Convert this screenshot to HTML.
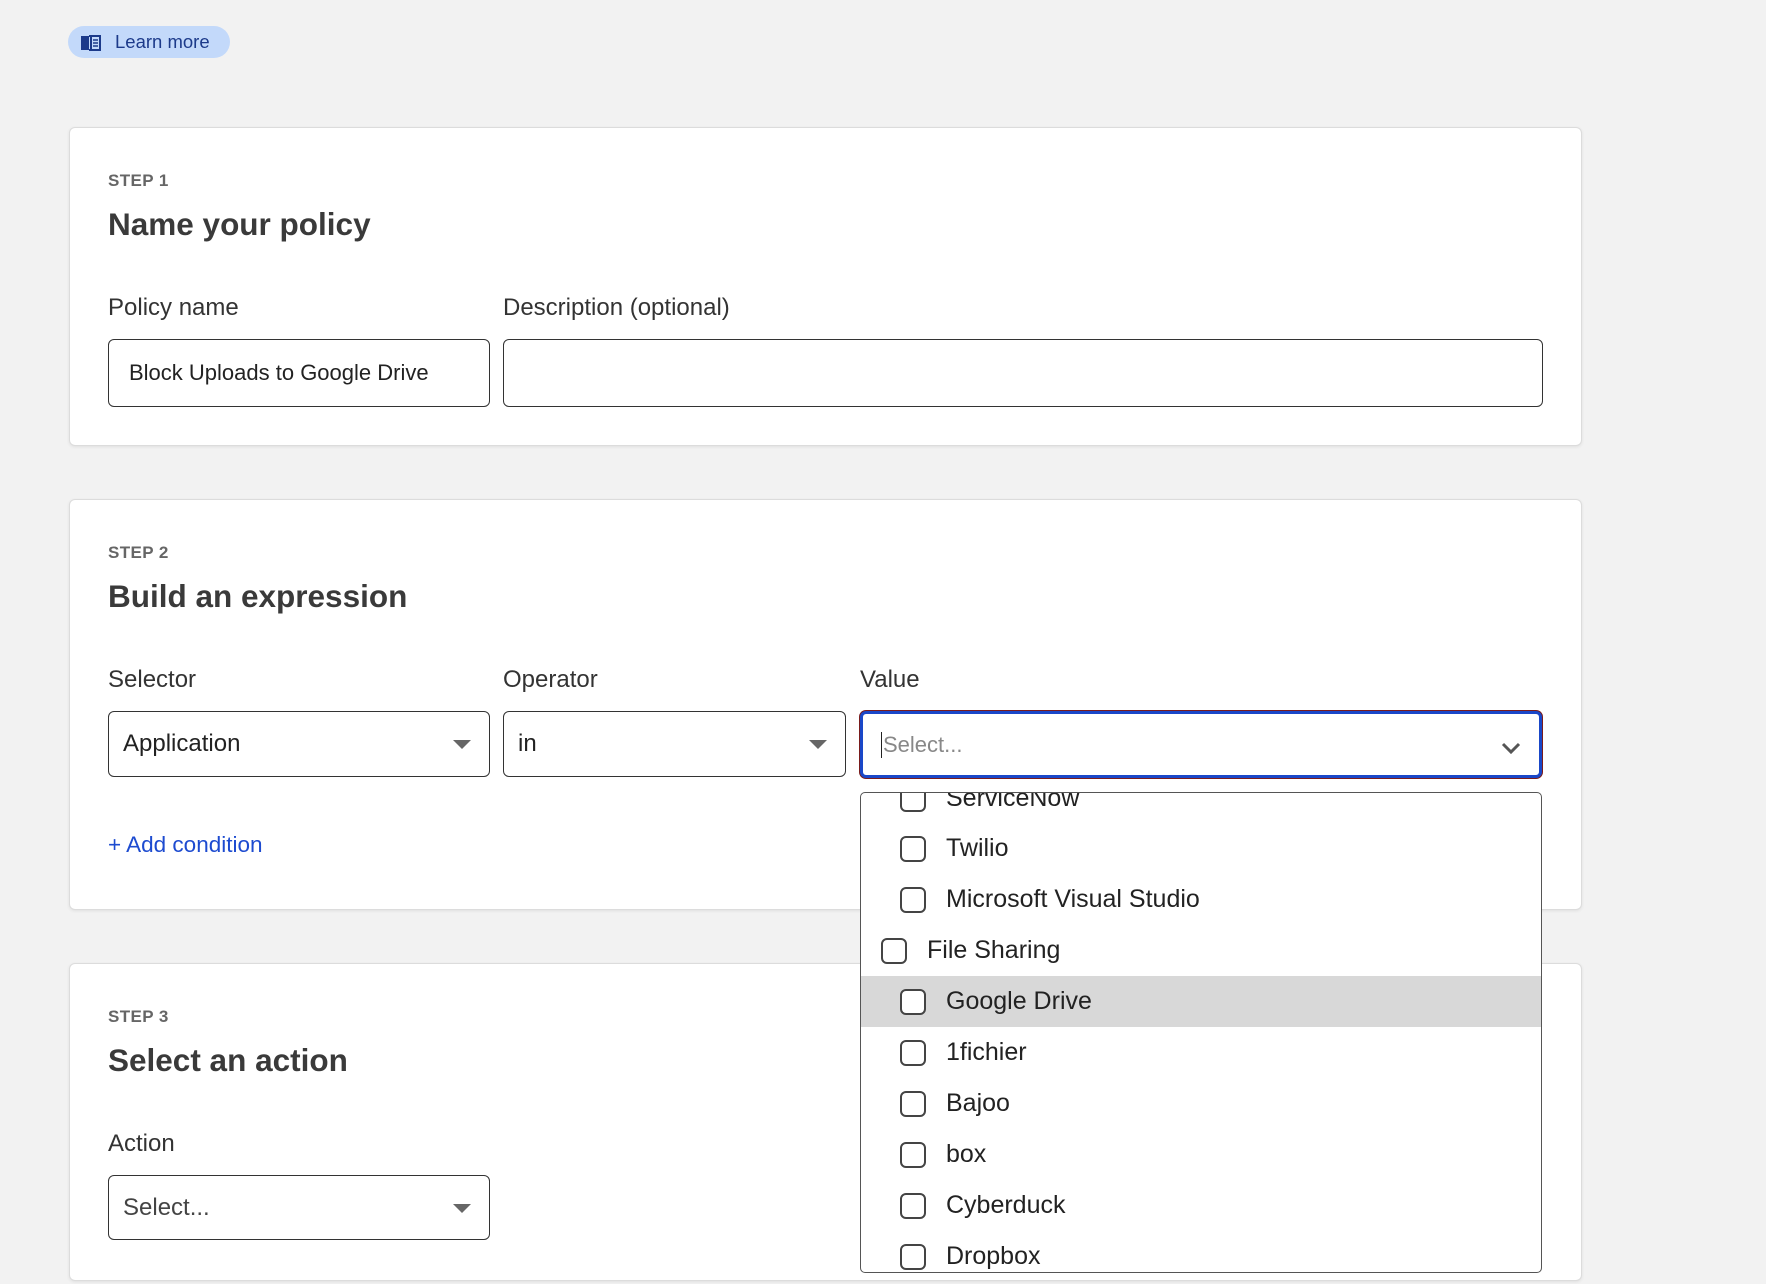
<!DOCTYPE html>
<html style="overflow:hidden;height:1284px"><head><meta charset="utf-8"><style>
*{box-sizing:border-box;margin:0;padding:0}
body{width:1766px;height:1284px;background:#f2f2f2;font-family:"Liberation Sans",Arial,sans-serif;position:relative;overflow:hidden;color:#222}
.abs{position:absolute}
.card{position:absolute;left:69px;width:1513px;background:#fff;border:1px solid #dcdcdc;border-radius:6px;box-shadow:0 1px 3px rgba(0,0,0,.08)}
.step{position:absolute;left:108px;font-size:17px;font-weight:bold;color:#666;letter-spacing:.4px}
.h{position:absolute;left:108px;font-size:31.5px;font-weight:bold;color:#3a3a3a}
.lbl{position:absolute;font-size:24px;color:#333}
.inp{position:absolute;border:1.5px solid #333;border-radius:6px;background:#fff;font-size:24px;padding-left:14px;display:flex;align-items:center}
.tri{position:absolute;right:18px;top:50%;margin-top:-4px;width:0;height:0;border-left:9px solid transparent;border-right:9px solid transparent;border-top:9px solid #666}
.row{position:absolute;left:0;width:100%;height:51px;font-size:25px;color:#222;display:flex;align-items:center}
.cb{width:26px;height:26px;border:2px solid #444;border-radius:6px;margin-right:20px;background:#fff;flex:none}
</style></head><body>
<div class="abs" style="left:68px;top:26px;width:162px;height:32px;background:#c3d9fa;border-radius:16px;display:flex;align-items:center;padding-left:12px;color:#1c3a8a;font-size:18.5px">
<svg width="22" height="17" viewBox="0 0 22 17" style="margin-right:13px"><path d="M1 2h8v14H1z" fill="#1c3a8a"/><path d="M11 2h9v14h-9z" fill="none" stroke="#1c3a8a" stroke-width="2"/><path d="M13 6h5M13 9h5M13 12h5" stroke="#1c3a8a" stroke-width="1.5"/><path d="M9 2l2 0M9 16h2" stroke="#1c3a8a" stroke-width="2"/></svg>Learn more</div>

<div class="card" style="top:127px;height:319px"></div>
<div class="step" style="top:171px">STEP 1</div>
<div class="h" style="top:206px">Name your policy</div>
<div class="lbl" style="left:108px;top:294px">Policy name</div>
<div class="lbl" style="left:503px;top:294px">Description (optional)</div>
<div class="inp" style="left:108px;top:339px;width:382px;height:68px;font-size:22px;padding-left:20px">Block Uploads to Google Drive</div>
<div class="inp" style="left:503px;top:339px;width:1040px;height:68px"></div>

<div class="card" style="top:499px;height:411px"></div>
<div class="step" style="top:543px">STEP 2</div>
<div class="h" style="top:578px">Build an expression</div>
<div class="lbl" style="left:108px;top:666px">Selector</div>
<div class="lbl" style="left:503px;top:666px">Operator</div>
<div class="lbl" style="left:860px;top:666px">Value</div>
<div class="inp" style="left:108px;top:711px;width:382px;height:66px">Application<div class="tri"></div></div>
<div class="inp" style="left:503px;top:711px;width:343px;height:66px">in<div class="tri"></div></div>
<div class="inp" style="left:860px;top:711px;width:682px;height:67px;border:3px solid #1a47c8;box-shadow:0 0 0 1px #7a1c1c;color:#888;font-size:22px;padding-left:18px"><span style="border-left:1.5px solid #222;padding-left:1px">Select...</span>
<svg width="20" height="12" viewBox="0 0 20 12" style="position:absolute;right:18px;top:28px"><path d="M2 2l8 8 8-8" fill="none" stroke="#555" stroke-width="3"/></svg></div>
<div class="abs" style="left:108px;top:832px;font-size:22.5px;color:#1d4bd0">+ Add condition</div>

<div class="card" style="top:963px;height:318px"></div>
<div class="step" style="top:1007px">STEP 3</div>
<div class="h" style="top:1042px">Select an action</div>
<div class="lbl" style="left:108px;top:1130px">Action</div>
<div class="inp" style="left:108px;top:1175px;width:382px;height:65px;color:#444">Select...<div class="tri"></div></div>

<div class="abs" style="left:860px;top:792px;width:682px;height:481px;background:#fff;border:1.5px solid #555;border-radius:5px;overflow:hidden">
<div class="row" style="top:-20px;padding-left:39px"><div class="cb"></div>ServiceNow</div>
<div class="row" style="top:30px;padding-left:39px"><div class="cb"></div>Twilio</div>
<div class="row" style="top:81px;padding-left:39px"><div class="cb"></div>Microsoft Visual Studio</div>
<div class="row" style="top:132px;padding-left:20px"><div class="cb"></div>File Sharing</div>
<div class="row" style="top:183px;padding-left:39px;background:#d8d8d8"><div class="cb"></div>Google Drive</div>
<div class="row" style="top:234px;padding-left:39px"><div class="cb"></div>1fichier</div>
<div class="row" style="top:285px;padding-left:39px"><div class="cb"></div>Bajoo</div>
<div class="row" style="top:336px;padding-left:39px"><div class="cb"></div>box</div>
<div class="row" style="top:387px;padding-left:39px"><div class="cb"></div>Cyberduck</div>
<div class="row" style="top:438px;padding-left:39px"><div class="cb"></div>Dropbox</div>
</div>
</body></html>
